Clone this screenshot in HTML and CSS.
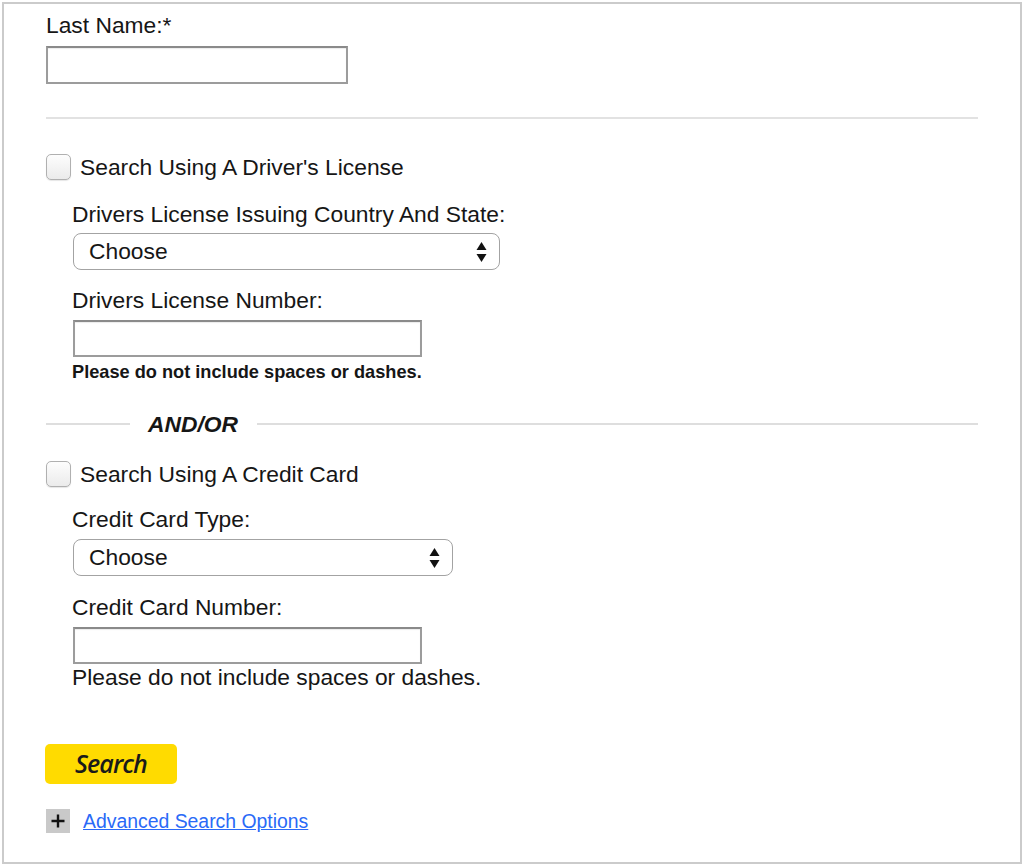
FILE: index.html
```html
<!DOCTYPE html>
<html lang="en">
<head>
<meta charset="utf-8">
<title>Search</title>
<link rel="stylesheet" href="styles.css">
</head>
<body>
<form class="frame">
  <label class="lbl" for="lname">Last Name:*</label>
  <input class="txt txt-name" id="lname" type="text">

  <hr class="sep">

  <label class="check-row"><input type="checkbox" class="cb">Search Using A Driver's License</label>
  <div class="sub">
    <label class="lbl lbl-first">Drivers License Issuing Country And State:</label>
    <div class="select sel-dl">
      <span>Choose</span>
      <svg class="arrows" width="11" height="22" viewBox="0 0 11 22"><path d="M5.5 1 L10.5 9 L0.5 9 Z" fill="#111"/><path d="M0.5 13 L10.5 13 L5.5 21 Z" fill="#111"/></svg>
    </div>
    <label class="lbl lbl-next">Drivers License Number:</label>
    <input class="txt txt-num" type="text">
    <p class="note-bold">Please do not include spaces or dashes.</p>
  </div>

  <div class="andor">
    <span class="line line-short"></span>
    <span class="andor-text">AND/OR</span>
    <span class="line line-long"></span>
  </div>

  <label class="check-row check-row-2"><input type="checkbox" class="cb">Search Using A Credit Card</label>
  <div class="sub">
    <label class="lbl lbl-first2">Credit Card Type:</label>
    <div class="select sel-cc">
      <span>Choose</span>
      <svg class="arrows" width="11" height="22" viewBox="0 0 11 22"><path d="M5.5 1 L10.5 9 L0.5 9 Z" fill="#111"/><path d="M0.5 13 L10.5 13 L5.5 21 Z" fill="#111"/></svg>
    </div>
    <label class="lbl lbl-next2">Credit Card Number:</label>
    <input class="txt txt-num txt-cc" type="text">
    <p class="note">Please do not include spaces or dashes.</p>
  </div>

  <button type="button" class="search-btn">Search</button>

  <div class="adv">
    <span class="plus"><svg width="14" height="14" viewBox="0 0 14 14"><path d="M7 0.5 V13.5 M0.5 7 H13.5" stroke="#111" stroke-width="2.4"/></svg></span>
    <a href="#" class="adv-link">Advanced Search Options</a>
  </div>
</form>
</body>
</html>
```

FILE: styles.css
```css
html, body {
  margin: 0;
  padding: 0;
  background: #fff;
}

body {
  font-family: "Liberation Sans", Arial, Helvetica, sans-serif;
  color: #161616;
}

.frame {
  box-sizing: border-box;
  margin: 2px;
  width: 1020px;
  height: 862px;
  border: 2px solid #cbcbcb;
  padding: 8px 42px 0 42px;
  display: flex;
  flex-direction: column;
  align-items: flex-start;
}

.lbl {
  display: block;
  font-size: 22.8px;
  line-height: 26px;
}

.txt {
  box-sizing: border-box;
  display: block;
  margin: 0;
  height: 38px;
  border: 2px solid #9c9c9c;
  border-top-color: #8a8a8a;
  background: #fff;
  box-shadow: inset 0 1px 1px rgba(0,0,0,0.08);
  padding: 0 6px;
  font: inherit;
  font-size: 20px;
}

.txt-name {
  width: 302px;
  margin-top: 8px;
}

.sep {
  align-self: stretch;
  margin: 33px 0 0 0;
  border: 0;
  height: 2px;
  background: #e2e2e2;
}

.check-row {
  display: flex;
  align-items: center;
  font-size: 22.8px;
  line-height: 26px;
  margin-top: 35px;
}

.check-row-2 {
  margin-top: 24px;
}

.cb {
  appearance: none;
  -webkit-appearance: none;
  box-sizing: border-box;
  width: 25px;
  height: 26px;
  margin: 0 9px 0 0;
  border: 1px solid #b0b0b0;
  border-radius: 5px;
  background: linear-gradient(#fdfdfd, #ebebeb);
  box-shadow: 0 1px 1px rgba(0,0,0,0.1);
}

.sub {
  margin-left: 27px;
  display: flex;
  flex-direction: column;
  align-items: flex-start;
}

.sub > .lbl, .sub > p {
  margin-left: -1px;
}

.lbl-first { margin-top: 21px; }
.lbl-next { margin-top: 17px; }
.lbl-first2 { margin-top: 19px; }
.lbl-next2 { margin-top: 18px; }

.select {
  box-sizing: border-box;
  display: flex;
  align-items: center;
  justify-content: space-between;
  height: 37px;
  margin-top: 6px;
  padding: 0 12px 0 15px;
  border: 1px solid #a3a3a3;
  border-radius: 8px;
  background: #fff;
  font-size: 22.8px;
}

.sel-dl { width: 427px; }
.sel-cc { width: 380px; margin-top: 7px; }

.arrows { display: block; }

.txt-num {
  width: 349px;
  height: 37px;
  margin-top: 7px;
}

.note-bold {
  margin: 5px 0 0 0;
  font-size: 18.2px;
  font-weight: bold;
  line-height: 20px;
}

.note {
  margin: 0;
  font-size: 22.8px;
  line-height: 26px;
}

.andor {
  align-self: stretch;
  display: flex;
  align-items: center;
  margin-top: 29px;
  height: 26px;
}

.line {
  height: 1.5px;
  background: #dedede;
}

.line-short { width: 84px; }
.line-long { flex: 1; }

.andor-text {
  margin: 0 19px 0 18px;
  font-size: 22.8px;
  line-height: 26px;
  font-weight: bold;
  font-style: italic;
}

.search-btn {
  box-sizing: border-box;
  width: 132px;
  height: 40px;
  margin-top: 54px;
  margin-left: -1px;
  padding: 0 0 2px 0;
  border: 0;
  border-radius: 5px;
  background: #ffdb00;
  color: #1a1a1a;
  font-family: "Open Sans", "Liberation Sans", sans-serif;
  font-style: italic;
  font-weight: 600;
  font-size: 25px;
  letter-spacing: -0.9px;
  line-height: 38px;
  cursor: pointer;
}

.adv {
  display: flex;
  align-items: center;
  margin-top: 25px;
  height: 24px;
}

.plus {
  width: 24px;
  height: 24px;
  background: #c9c9c9;
  display: flex;
  align-items: center;
  justify-content: center;
}

.adv-link {
  margin-left: 13px;
  font-size: 19.4px;
  line-height: 24px;
  color: #2a6af7;
  text-decoration: underline;
}
```
